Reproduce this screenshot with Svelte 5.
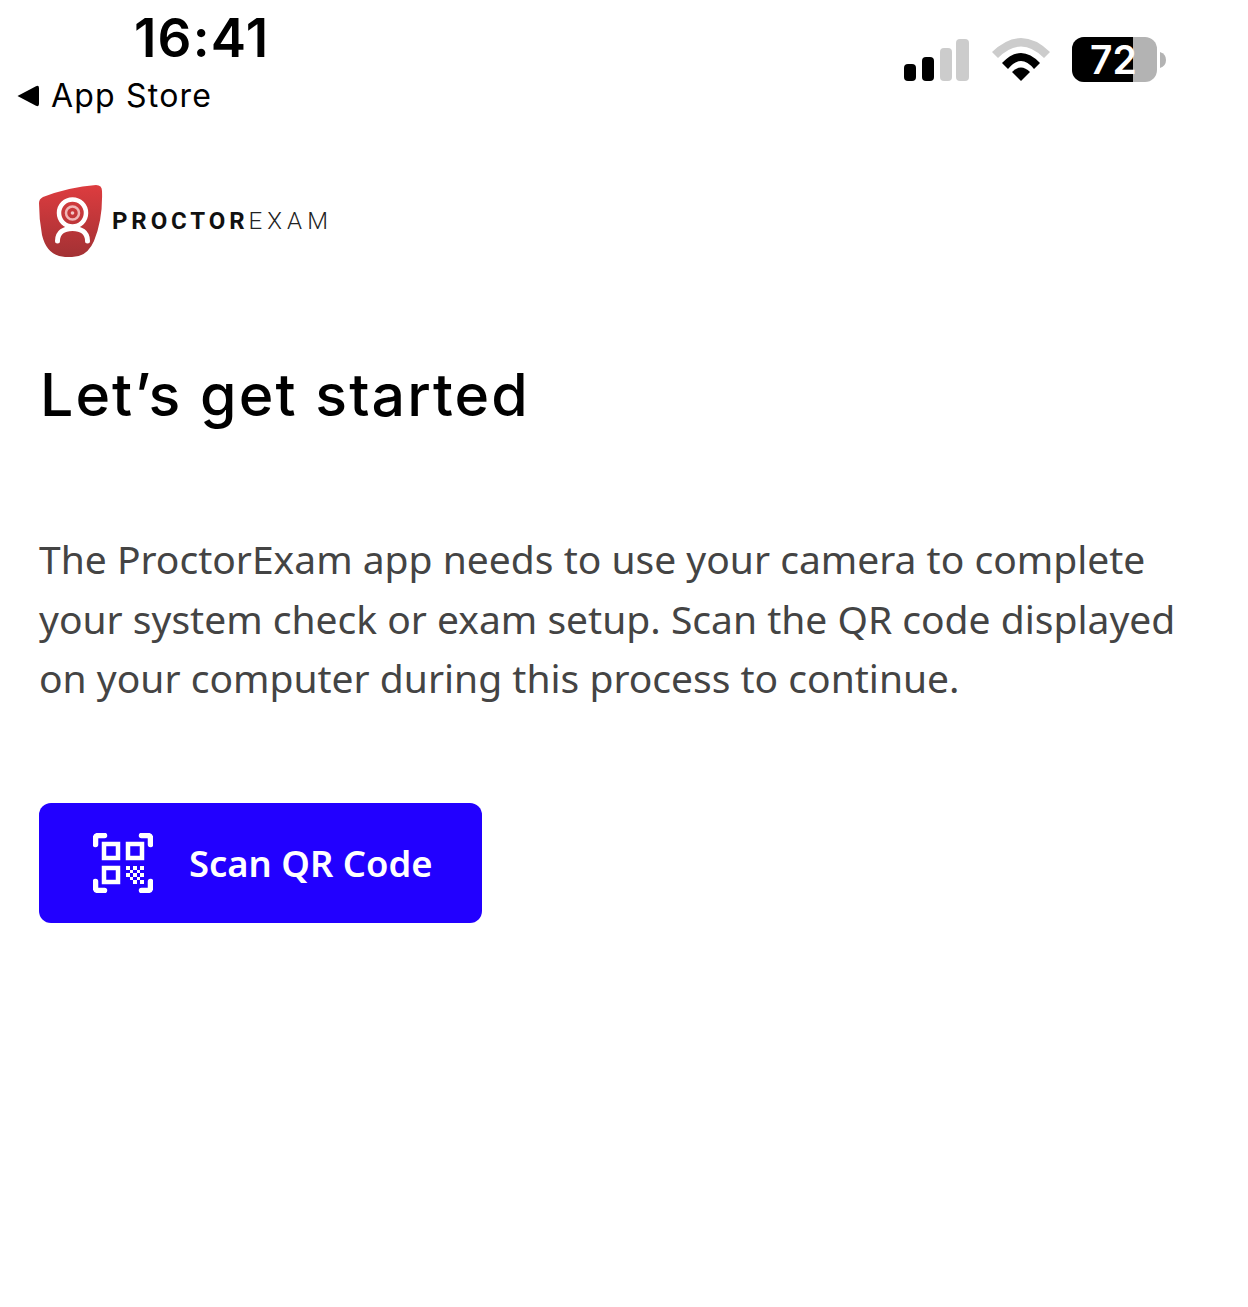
<script>
  const qrCells = [
    [0, 0], [2, 0], [4, 0],
    [1, 1], [3, 1],
    [0, 2], [2, 2], [4, 2],
    [1, 3], [3, 3],
    [2, 4], [4, 4]
  ];
</script>

<main>
  <header class="status">
    <div class="left">
      <div class="time">16:41</div>
      <div class="back">
        <svg class="arrow" width="22" height="22" viewBox="0 0 22 22">
          <path d="M0.5 11 L19 1.2 Q22 0 22 3 V19 Q22 22 19 20.8 Z" fill="#000" />
        </svg>
        <span>App Store</span>
      </div>
    </div>
    <div class="right">
      <svg width="66" height="42" viewBox="0 0 66 42">
        <rect x="0" y="25" width="12" height="17" rx="4" fill="#000" />
        <rect x="18" y="18" width="12" height="24" rx="4" fill="#000" />
        <rect x="36" y="9" width="12" height="33" rx="4" fill="#ccc" />
        <rect x="52" y="0" width="13" height="42" rx="4" fill="#ccc" />
      </svg>
      <svg class="wifi" width="58" height="43" viewBox="0 0 58 43">
        <path d="M0 14 Q29 -14 58 14 L52 20 Q29 -3 6 20 Z" fill="#ccc" />
        <path d="M10 25 Q29 5 48 25 L42 31 Q29 15 16 31 Z" fill="#000" />
        <path d="M20 34 Q29 25 38 34 L29 43 Z" fill="#000" />
      </svg>
      <div class="battery">
        <div class="cell">
          <div class="fill"></div>
          <span>72</span>
        </div>
        <svg class="nub" width="6" height="16" viewBox="0 0 6 16">
          <path d="M0 0 Q6 2 6 8 Q6 14 0 16 Z" fill="#b3b3b3" />
        </svg>
      </div>
    </div>
  </header>

  <section class="content">
    <div class="logo">
      <svg width="64" height="73" viewBox="0 0 64 73">
        <defs>
          <linearGradient id="shield" x1="0" y1="0" x2="0" y2="1">
            <stop offset="0" stop-color="#dd3c3f" />
            <stop offset="1" stop-color="#a33134" />
          </linearGradient>
        </defs>
        <path d="M4 12 Q30 2 57 0 Q63 0 63 6 Q64 34 55 56 Q48 72 33 72 L26 72 Q8 71 3 50 Q0 34 0 18 Q0 14 4 12 Z" fill="url(#shield)" />
        <circle cx="33.5" cy="28" r="13.5" fill="none" stroke="#fff" stroke-width="4.5" />
        <circle cx="33.5" cy="28" r="6.5" fill="none" stroke="#f0b5b6" stroke-width="2.5" />
        <circle cx="33.5" cy="28" r="1.8" fill="#f3c7c8" />
        <path d="M18.5 56 C18.5 47 25 43.5 33.5 43.5 C42 43.5 48.5 47 48.5 56" fill="none" stroke="#fff" stroke-width="5" stroke-linecap="round" />
      </svg>
      <span class="brand"><b>PROCTOR</b>EXAM</span>
    </div>

    <h1>Let’s get started</h1>

    <p>The ProctorExam app needs to use your camera to complete your system check or exam setup. Scan the QR code displayed on your computer during this process to continue.</p>

    <button>
      <svg width="60" height="60" viewBox="0 0 60 60">
        <path d="M2.5 11.5 V5.5 Q2.5 2.5 5.5 2.5 H11.5 M48.5 2.5 H54.5 Q57.5 2.5 57.5 5.5 V11.5 M2.5 48.5 V54.5 Q2.5 57.5 5.5 57.5 H11.5 M57.5 48.5 V54.5 Q57.5 57.5 54.5 57.5 H48.5" fill="none" stroke="#fff" stroke-width="5.5" stroke-linecap="round" />
        <rect x="11" y="11" width="14" height="14" fill="none" stroke="#fff" stroke-width="4.5" />
        <rect x="35" y="11" width="14" height="14" fill="none" stroke="#fff" stroke-width="4.5" />
        <rect x="11" y="35" width="14" height="14" fill="none" stroke="#fff" stroke-width="4.5" />
        {#each qrCells as c}
          <rect x={33 + c[0] * 3.6} y={33 + c[1] * 3.6} width="3.6" height="3.6" fill="#fff" shape-rendering="crispEdges" />
        {/each}
      </svg>
      <span>Scan QR Code</span>
    </button>
  </section>
</main>

<style>
  :global(body) {
    margin: 0;
    background: #fff;
  }
  main {
    height: 1307px;
    font-family: "Noto Sans", sans-serif;
  }
  .status {
    display: flex;
    justify-content: space-between;
    height: 185px;
    padding: 0 82px 0 17px;
    box-sizing: border-box;
    font-family: Inter, sans-serif;
    color: #000;
  }
  .time {
    margin-top: 8px;
    padding-left: 117px;
    font-size: 53px;
    font-weight: 600;
    line-height: 60px;
    letter-spacing: 1.2px;
  }
  .back {
    display: flex;
    align-items: center;
    gap: 12px;
    margin-top: 9px;
    font-size: 32px;
    line-height: 38px;
    letter-spacing: 1.2px;
  }
  .right {
    display: flex;
    align-items: flex-start;
    padding-top: 39px;
  }
  .wifi {
    margin-left: 22px;
    margin-top: -1px;
  }
  .battery {
    display: flex;
    align-items: center;
    margin-left: 22px;
    margin-top: -2px;
  }
  .cell {
    position: relative;
    overflow: hidden;
    width: 85px;
    height: 45px;
    border-radius: 12px;
    background: #b3b3b3;
    text-align: center;
  }
  .fill {
    position: absolute;
    inset: 0 24px 0 0;
    background: #000;
  }
  .cell span {
    position: relative;
    display: block;
    padding-right: 2px;
    color: #fff;
    font-size: 39px;
    font-weight: 600;
    line-height: 45px;
  }
  .nub {
    margin-left: 3px;
  }
  .content {
    padding: 0 39px;
  }
  .logo {
    display: flex;
    align-items: center;
    gap: 9px;
  }
  .brand {
    position: relative;
    top: -1px;
    font-family: Roboto, sans-serif;
    font-size: 24px;
    font-weight: 300;
    letter-spacing: 5.1px;
    color: #222;
  }
  .brand b {
    font-weight: 700;
    letter-spacing: 3.9px;
    color: #111;
  }
  h1 {
    margin: 97px 0 0 1px;
    font-family: Inter, sans-serif;
    font-size: 59px;
    font-weight: 450;
    line-height: 80px;
    letter-spacing: 2.05px;
    color: #000;
  }
  p {
    margin: 94px 0 0;
    width: 1170px;
    font-size: 39px;
    line-height: 59.5px;
    color: #444;
  }
  button {
    display: flex;
    align-items: center;
    gap: 36px;
    width: 443px;
    height: 120px;
    margin-top: 95px;
    padding: 0 0 0 54px;
    border: 0;
    border-radius: 12px;
    background: #2200ff;
    color: #fff;
    font-family: "Noto Sans", sans-serif;
    font-size: 36.4px;
    font-weight: 600;
  }
</style>
